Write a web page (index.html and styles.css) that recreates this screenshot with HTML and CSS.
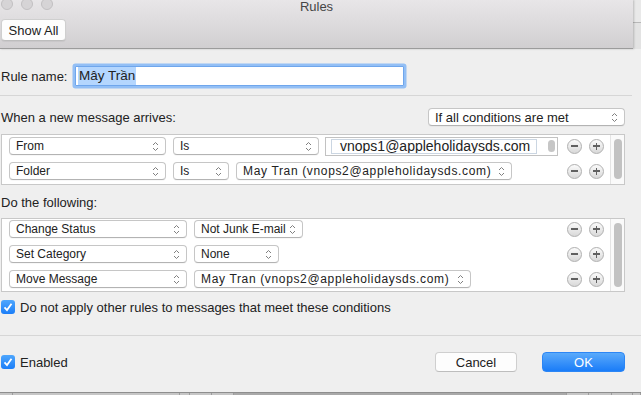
FILE: index.html
```html
<!DOCTYPE html>
<html lang="en">
<head>
    <meta charset="UTF-8">
    <title>Rules</title>
    <link rel="stylesheet" href="styles.css">
</head>
<body>
    <div class="top">
        <div class="toolbar">
            <div class="titlebar">
                <div class="lights"><span></span><span></span><span></span></div>
                <div class="title">Rules</div>
                <div></div>
            </div>
            <div class="tools">
                <button class="btn show-all">Show All</button>
            </div>
        </div>
        <div class="side"></div>
    </div>

    <div class="content">
        <div class="name-row">
            <label class="name-label">Rule name:</label>
            <div class="name-field"><span class="sel">Mây Trần</span></div>
        </div>

        <div class="sep short"></div>

        <div class="section-head">
            <span>When a new message arrives:</span>
            <div class="popup match-pop big">If all conditions are met
                <svg class="chev" viewBox="0 0 7 11" width="7" height="11"><path d="M1 4 3.5 1.5 6 4M1 7 3.5 9.5 6 7"/></svg>
            </div>
        </div>

        <div class="list cond">
            <div class="rows">
                <div class="row">
                    <div class="popup field-pop">From<svg class="chev" viewBox="0 0 7 11" width="7" height="11"><path d="M1 4 3.5 1.5 6 4M1 7 3.5 9.5 6 7"/></svg></div>
                    <div class="popup op-pop">Is<svg class="chev" viewBox="0 0 7 11" width="7" height="11"><path d="M1 4 3.5 1.5 6 4M1 7 3.5 9.5 6 7"/></svg></div>
                    <div class="addr-box">
                        <span class="token">vnops1@appleholidaysds.com</span>
                        <span class="mini-scroll"></span>
                    </div>
                    <div class="round-btns"><span class="round minus"></span><span class="round plus"></span></div>
                </div>
                <div class="row">
                    <div class="popup field-pop">Folder<svg class="chev" viewBox="0 0 7 11" width="7" height="11"><path d="M1 4 3.5 1.5 6 4M1 7 3.5 9.5 6 7"/></svg></div>
                    <div class="popup op-short">Is<svg class="chev" viewBox="0 0 7 11" width="7" height="11"><path d="M1 4 3.5 1.5 6 4M1 7 3.5 9.5 6 7"/></svg></div>
                    <div class="popup target-pop">May Tran (vnops2@appleholidaysds.com)<svg class="chev" viewBox="0 0 7 11" width="7" height="11"><path d="M1 4 3.5 1.5 6 4M1 7 3.5 9.5 6 7"/></svg></div>
                    <div class="round-btns"><span class="round minus"></span><span class="round plus"></span></div>
                </div>
            </div>
            <div class="scroll"><span></span></div>
        </div>

        <div class="label-line">Do the following:</div>

        <div class="list actions">
            <div class="rows">
                <div class="row">
                    <div class="popup action-pop">Change Status<svg class="chev" viewBox="0 0 7 11" width="7" height="11"><path d="M1 4 3.5 1.5 6 4M1 7 3.5 9.5 6 7"/></svg></div>
                    <div class="popup status-pop">Not Junk E-mail<svg class="chev" viewBox="0 0 7 11" width="7" height="11"><path d="M1 4 3.5 1.5 6 4M1 7 3.5 9.5 6 7"/></svg></div>
                    <div class="round-btns"><span class="round minus"></span><span class="round plus"></span></div>
                </div>
                <div class="row">
                    <div class="popup action-pop">Set Category<svg class="chev" viewBox="0 0 7 11" width="7" height="11"><path d="M1 4 3.5 1.5 6 4M1 7 3.5 9.5 6 7"/></svg></div>
                    <div class="popup cat-pop">None<svg class="chev" viewBox="0 0 7 11" width="7" height="11"><path d="M1 4 3.5 1.5 6 4M1 7 3.5 9.5 6 7"/></svg></div>
                    <div class="round-btns"><span class="round minus"></span><span class="round plus"></span></div>
                </div>
                <div class="row">
                    <div class="popup action-pop">Move Message<svg class="chev" viewBox="0 0 7 11" width="7" height="11"><path d="M1 4 3.5 1.5 6 4M1 7 3.5 9.5 6 7"/></svg></div>
                    <div class="popup folder-pop">May Tran (vnops2@appleholidaysds.com)<svg class="chev" viewBox="0 0 7 11" width="7" height="11"><path d="M1 4 3.5 1.5 6 4M1 7 3.5 9.5 6 7"/></svg></div>
                    <div class="round-btns"><span class="round minus"></span><span class="round plus"></span></div>
                </div>
            </div>
            <div class="scroll"><span></span></div>
        </div>

        <div class="check-row stop">
            <span class="checkbox"><svg viewBox="0 0 14 14" width="14" height="14"><path d="M3.5 7.3 6 10 10.5 3.8"/></svg></span>
            <span>Do not apply other rules to messages that meet these conditions</span>
        </div>
    </div>

    <div class="sep"></div>

    <div class="content">
        <div class="footer">
            <div class="check-row">
                <span class="checkbox"><svg viewBox="0 0 14 14" width="14" height="14"><path d="M3.5 7.3 6 10 10.5 3.8"/></svg></span>
                <span>Enabled</span>
            </div>
            <button class="btn cancel">Cancel</button>
            <button class="btn ok">OK</button>
        </div>
    </div>

    <div class="under">
        <span></span><span></span><span></span><span></span><span></span>
        <span class="dark"></span><span></span><span></span><span></span><span></span>
    </div>
</body>
</html>
```

FILE: styles.css
```css
body {
    margin: 0;
    width: 641px;
    height: 395px;
    overflow: hidden;
    background: #efefef;
    font-family: "Liberation Sans", Arial, sans-serif;
    font-size: 13px;
    color: #222;
}

/* title bar + toolbar */
.top {
    display: flex;
    height: 49px;
}
.toolbar {
    width: 633px;
    height: 48px;
    background: linear-gradient(#e8e6e8, #d1cfd1);
    border-bottom: 1px solid #9c9c9c;
    box-shadow: 1px 0 2px rgba(0, 0, 0, .2);
    position: relative;
    z-index: 1;
}
.side {
    flex: 1;
    background: linear-gradient(#e9e9e9 0 22px, #b8b8b8 22px 23px, #e3e3e3 23px);
}
.titlebar {
    height: 17px;
    display: grid;
    grid-template-columns: 1fr auto 1fr;
}
.lights {
    display: flex;
    gap: 8px;
    margin: -2px 0 0 1px;
}
.lights span {
    width: 12px;
    height: 12px;
    box-sizing: border-box;
    border-radius: 50%;
    background: #d6d4d6;
    border: 1px solid #c2c0c2;
}
.title {
    color: #454545;
    line-height: 13px;
}
.tools {
    padding: 2px 0 0 1px;
}

.btn {
    font-family: "Liberation Sans", Arial, sans-serif;
    font-size: 13px;
    color: #222;
    background: #fdfdfd;
    border: 1px solid #cfcfcf;
    border-bottom-color: #bdbdbd;
    border-radius: 4px;
    padding: 0;
    box-sizing: border-box;
}
.show-all {
    width: 65px;
    height: 22px;
    box-shadow: 0 1px 1px rgba(0, 0, 0, .06);
}

/* form body */
.content {
    margin-left: 1px;
    width: 624px;
}
.name-row {
    margin-top: 14px;
    height: 26px;
    display: flex;
    align-items: center;
}
.name-label {
    width: 74px;
}
.name-field {
    width: 329px;
    height: 20px;
    box-sizing: border-box;
    background: #fff;
    border: 1px solid #6fa6ec;
    box-shadow: 0 0 0 2.5px #93bff5;
    border-radius: 1px;
    padding-left: 2px;
    display: flex;
    align-items: center;
    font-size: 13.5px;
}
.sel {
    background: #b4d6fe;
    line-height: 18px;
    padding: 0 1px;
}

.sep {
    height: 1px;
    background: #d6d6d6;
    margin-top: 21px;
}
.sep.short {
    width: 632px;
    margin: 6px 0 0 -1px;
}

.section-head {
    margin-top: 12px;
    height: 18px;
    display: flex;
    align-items: center;
}
.section-head .popup {
    margin-left: auto;
}

.popup {
    height: 18px;
    box-sizing: border-box;
    background: #fff;
    border: 1px solid #c6c6c6;
    border-bottom-color: #b3b3b3;
    border-radius: 4px;
    padding: 0 6px;
    display: flex;
    align-items: center;
    justify-content: space-between;
    font-size: 12px;
    white-space: nowrap;
    box-shadow: 0 1px 0 rgba(0, 0, 0, .03);
}
.popup.big {
    font-size: 13px;
}
.chev {
    flex-shrink: 0;
}
.chev path {
    fill: none;
    stroke: #808080;
    stroke-width: 1;
}
.match-pop { width: 197px; }
.field-pop { width: 157px; }
.op-pop { width: 146px; }
.op-short { width: 56px; }
.target-pop { width: 276px; letter-spacing: .65px; }
.action-pop { width: 178px; }
.status-pop { width: 109px; }
.cat-pop { width: 85px; }
.folder-pop { width: 277px; letter-spacing: .65px; }

/* rule lists */
.list {
    display: flex;
    background: #fff;
    border: 1px solid #c8c8c8;
}
.cond {
    margin-top: 8px;
    height: 49px;
}
.actions {
    margin-top: 7px;
    height: 72px;
}
.rows {
    flex: 1;
    display: flex;
    flex-direction: column;
    gap: 7px;
    padding: 2px 6px 0 7px;
}
.actions .rows {
    padding-top: 1px;
}
.row {
    height: 18px;
    display: flex;
    align-items: center;
    gap: 7px;
}
.round-btns {
    margin-left: auto;
    display: flex;
    gap: 7px;
}
.round {
    width: 15px;
    height: 15px;
    box-sizing: border-box;
    border-radius: 50%;
    border: 1px solid #b0b0b0;
    background: linear-gradient(#fbfbfb, #d8d8d8);
    position: relative;
}
.round::before,
.plus::after {
    content: "";
    position: absolute;
    left: 3px;
    top: 5.5px;
    width: 7px;
    height: 1.6px;
    background: #606060;
}
.plus::after {
    left: 5.7px;
    top: 3px;
    width: 1.6px;
    height: 7px;
}
.scroll {
    width: 14px;
    border-left: 1px solid #e4e4e4;
    background: #fafafa;
    padding: 4px 0 4px 3px;
    box-sizing: border-box;
    display: flex;
}
.cond .scroll {
    padding-bottom: 5px;
}
.scroll span {
    width: 8px;
    border-radius: 4px;
    background: #c2c2c2;
}

.addr-box {
    margin-left: -1px;
    width: 233px;
    height: 19px;
    box-sizing: border-box;
    border: 1px solid #c2c2c2;
    background: #fff;
    display: flex;
    align-items: center;
    padding: 0 2px 0 5px;
}
.token {
    width: 206px;
    height: 15px;
    box-sizing: border-box;
    border: 1px solid #cbd6e2;
    font-size: 14px;
    line-height: 13px;
    padding-left: 8px;
    white-space: nowrap;
    overflow: hidden;
}
.mini-scroll {
    margin-left: auto;
    width: 7px;
    height: 12px;
    border-radius: 3.5px;
    background: #c6c6c6;
}

.label-line {
    margin-top: 10px;
    line-height: 16px;
}

.check-row {
    display: flex;
    align-items: center;
    gap: 5px;
    height: 14px;
}
.check-row.stop {
    margin-top: 8px;
}
.checkbox {
    width: 14px;
    height: 14px;
    border-radius: 3px;
    background: linear-gradient(#4ea6fd, #1b7ef8);
    display: flex;
}
.checkbox path {
    fill: none;
    stroke: #fff;
    stroke-width: 1.8;
}

.footer {
    margin-top: 16px;
    height: 20px;
    display: flex;
    align-items: center;
}
.cancel {
    margin-left: auto;
    width: 82px;
    height: 20px;
}
.ok {
    margin-left: 25px;
    width: 83px;
    height: 20px;
    color: #fff;
    border: 1px solid #2c86f5;
    background: linear-gradient(#5aaafb, #1a7cf8);
}

/* edge of the window underneath */
.under {
    margin-top: 20px;
    height: 3px;
    border-top: 1px solid #8e8e8e;
    background: #c6c6c6;
    display: grid;
    grid-template-columns: 13px 167px 10px 22px 22px 333px 22px 23px 21px 1fr;
}
.under span {
    border-right: 1px solid #9d9d9d;
}
.under .dark {
    background: #a9a9a9;
}
```
